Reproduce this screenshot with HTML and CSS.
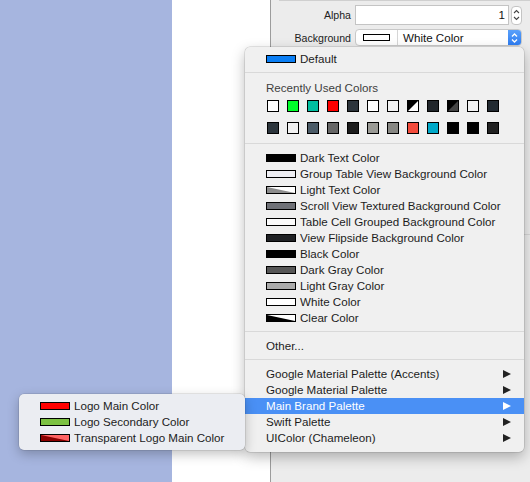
FILE: index.html
```html
<!DOCTYPE html>
<html>
<head>
<meta charset="utf-8">
<link rel="stylesheet" href="styles.css">
</head>
<body>
<div class="app">
  <div class="canvas-blue"></div>
  <div class="canvas-white"></div>
  <div class="divider"></div>
  <div class="inspector">
    <div class="topline"></div>
    <div class="prop-grid">
      <div class="label">Alpha</div>
      <div class="field-wrap">
        <div class="textfield">1</div>
        <div class="stepper">
          <svg width="7" height="14" viewBox="0 0 7 14"><path d="M1 5 L3.5 2.5 L6 5 M1 9 L3.5 11.5 L6 9" fill="none" stroke="#444" stroke-width="1.1"/></svg>
        </div>
      </div>
      <div class="label">Background</div>
      <div class="popup">
        <div class="popup-swatch-cell"><span class="popup-swatch"></span></div>
        <div class="popup-text">White Color</div>
        <div class="popup-arrows">
          <svg width="7" height="12" viewBox="0 0 7 12"><path d="M1 4.5 L3.5 2 L6 4.5 M1 7.5 L3.5 10 L6 7.5" fill="none" stroke="#fff" stroke-width="1.3"/></svg>
        </div>
      </div>
    </div>
    <div class="panel-sep"></div>
  </div>

  <div class="menu">
    <div class="item"><span class="sw" style="background:#0a7ef4"></span>Default</div>
    <div class="sep"></div>
    <div class="header">Recently Used Colors</div>
    <div class="recent">
      <span class="sq" style="background:#ffffff"></span>
      <span class="sq" style="background:#00ff2a"></span>
      <span class="sq" style="background:#00bfa0"></span>
      <span class="sq" style="background:#ff0000"></span>
      <span class="sq" style="background:#2c343b"></span>
      <span class="sq" style="background:#ffffff"></span>
      <span class="sq" style="background:#f1f1f1"></span>
      <span class="sq light-bg"><svg class="tri" width="10" height="10" viewBox="0 0 10 10"><polygon points="0,0 10,0 0,10" fill="#000"/></svg></span>
      <span class="sq" style="background:#21262b"></span>
      <span class="sq grey-bg"><svg class="tri" width="10" height="10" viewBox="0 0 10 10"><polygon points="0,0 10,0 0,10" fill="#000"/></svg></span>
      <span class="sq" style="background:#f1f1f1"></span>
      <span class="sq" style="background:#222a31"></span>

      <span class="sq" style="background:#2c353c"></span>
      <span class="sq" style="background:#f1f1f1"></span>
      <span class="sq" style="background:#4b5b67"></span>
      <span class="sq" style="background:#666666"></span>
      <span class="sq" style="background:#1c1c1c"></span>
      <span class="sq" style="background:#9a9a95"></span>
      <span class="sq" style="background:#878783"></span>
      <span class="sq" style="background:#f44c3c"></span>
      <span class="sq" style="background:#00a9c9"></span>
      <span class="sq" style="background:#000000"></span>
      <span class="sq" style="background:#000000"></span>
      <span class="sq" style="background:#222222"></span>
    </div>
    <div class="sep sep-after-grid"></div>
    <div class="item"><span class="sw" style="background:#000"></span>Dark Text Color</div>
    <div class="item"><span class="sw" style="background:#efeff4"></span>Group Table View Background Color</div>
    <div class="item"><span class="sw light-bg"><svg class="tri" width="28" height="6" viewBox="0 0 28 6"><polygon points="0,0 28,6 0,6" fill="#8c8c8c"/></svg></span>Light Text Color</div>
    <div class="item"><span class="sw" style="background:#6f7177"></span>Scroll View Textured Background Color</div>
    <div class="item"><span class="sw" style="background:#fbfbfb"></span>Table Cell Grouped Background Color</div>
    <div class="item"><span class="sw" style="background:#1f2124"></span>View Flipside Background Color</div>
    <div class="item"><span class="sw" style="background:#000"></span>Black Color</div>
    <div class="item"><span class="sw" style="background:#555"></span>Dark Gray Color</div>
    <div class="item"><span class="sw" style="background:#aaa"></span>Light Gray Color</div>
    <div class="item"><span class="sw" style="background:#fff"></span>White Color</div>
    <div class="item"><span class="sw light-bg"><svg class="tri" width="28" height="6" viewBox="0 0 28 6"><polygon points="0,0 28,6 0,6" fill="#000"/></svg></span>Clear Color</div>
    <div class="sep"></div>
    <div class="item">Other...</div>
    <div class="sep sep-b"></div>
    <div class="item sub">Google Material Palette (Accents)<span class="arrow"></span></div>
    <div class="item sub">Google Material Palette<span class="arrow"></span></div>
    <div class="item sub selected">Main Brand Palette<span class="arrow"></span></div>
    <div class="item sub">Swift Palette<span class="arrow"></span></div>
    <div class="item sub">UIColor (Chameleon)<span class="arrow"></span></div>
  </div>

  <div class="submenu">
    <div class="item"><span class="sw" style="background:#ff0000"></span>Logo Main Color</div>
    <div class="item"><span class="sw" style="background:#7cc142"></span>Logo Secondary Color</div>
    <div class="item"><span class="sw pink-bg"><svg class="tri" width="28" height="6" viewBox="0 0 28 6"><polygon points="0,0 28,6 0,6" fill="#8a0000"/></svg></span>Transparent Logo Main Color</div>
  </div>
</div>
</body>
</html>
```

FILE: styles.css
```css
html, body {
  margin: 0;
  padding: 0;
}
body {
  width: 530px;
  height: 482px;
  overflow: hidden;
  font-family: "Liberation Sans", Arial, sans-serif;
  color: #1c1c1c;
}
.app {
  position: relative;
  width: 530px;
  height: 482px;
  display: grid;
  grid-template-columns: 172px 98px 1px 1fr;
}
.canvas-blue { background: #a6b5df; }
.canvas-white { background: #ffffff; }
.divider { background: #9c9c9c; }
.inspector {
  background: #ececec;
  display: flex;
  flex-direction: column;
}
.topline {
  height: 1px;
  margin-left: 8px;
  background: #cfcfcf;
}
.prop-grid {
  display: grid;
  grid-template-columns: 80px 167px;
  column-gap: 4px;
  row-gap: 4px;
  margin-top: 4px;
  align-items: center;
}
.label {
  text-align: right;
  font-size: 10.6px;
  color: #222;
}
.field-wrap {
  display: flex;
  align-items: center;
  gap: 2px;
}
.textfield {
  width: 154px;
  height: 20px;
  box-sizing: border-box;
  background: #fff;
  border: 1px solid #c4c4c4;
  font-size: 11.6px;
  line-height: 18px;
  text-align: right;
  padding-right: 3px;
  color: #111;
}
.stepper {
  width: 11px;
  height: 19px;
  box-sizing: border-box;
  background: #fff;
  border: 1px solid #c4c4c4;
  border-radius: 4px;
  display: flex;
  align-items: center;
  justify-content: center;
}
.popup {
  height: 17px;
  display: flex;
  background: #fff;
  border: 1px solid #c8c8c8;
  border-radius: 4px;
  box-sizing: border-box;
  overflow: hidden;
}
.popup-swatch-cell {
  width: 41px;
  border-right: 1px solid #d6d6d6;
  display: flex;
  align-items: center;
  justify-content: center;
}
.popup-swatch {
  width: 27px;
  height: 7px;
  box-sizing: border-box;
  border: 1px solid #000;
  background: #fff;
}
.popup-text {
  flex: 1;
  font-size: 11.6px;
  line-height: 15px;
  padding-left: 5px;
  color: #111;
}
.popup-arrows {
  width: 13px;
  background: linear-gradient(#5aa0fa, #2f7ef2);
  display: flex;
  align-items: center;
  justify-content: center;
}
.panel-sep {
  margin-top: 188px;
  height: 1px;
  background: #d6d6d6;
}

/* menu */
.menu {
  position: absolute;
  left: 245px;
  top: 47px;
  width: 279px;
  padding: 4px 0 6px;
  box-sizing: border-box;
  display: flex;
  flex-direction: column;
  background: #f0f0f0;
  border-radius: 5px;
  box-shadow: 0 0 0 0.5px rgba(0,0,0,0.18), 0 5px 14px rgba(0,0,0,0.28);
}
.item {
  position: relative;
  height: 16px;
  line-height: 16px;
  font-size: 11.6px;
  padding-left: 21px;
  display: flex;
  align-items: center;
  white-space: nowrap;
  flex: none;
}
.sw {
  display: inline-block;
  width: 30px;
  height: 8px;
  box-sizing: border-box;
  border: 1px solid #000;
  margin-right: 4px;
  flex: none;
  overflow: hidden;
}
.tri {
  display: block;
}
.light-bg { background: #fff; }
.grey-bg { background: #444; }
.pink-bg { background: #ff6464; }
.sep {
  height: 1px;
  background: #d9d9d9;
  margin: 5px 0 6px;
  flex: none;
}
.sep-b {
  margin: 5px 0 6px;
}
.header {
  height: 16px;
  line-height: 16px;
  font-size: 11.6px;
  color: #3e3e3e;
  padding-left: 21px;
  margin-top: 1px;
}
.recent {
  display: grid;
  grid-template-columns: repeat(12, 12px);
  column-gap: 8px;
  row-gap: 10px;
  padding-left: 22px;
  margin-top: 4px;
}
.sq {
  width: 12px;
  height: 12px;
  box-sizing: border-box;
  border: 1px solid #000;
  overflow: hidden;
}

.sep-after-grid {
  margin: 9px 0 6px;
}

.sub .arrow {
  position: absolute;
  left: 258px;
  top: 3.5px;
  width: 0;
  height: 0;
  border-top: 4.5px solid transparent;
  border-bottom: 4.5px solid transparent;
  border-left: 8px solid #222;
}
.selected {
  background: #4a90f5;
  color: #fff;
}
.selected .arrow {
  border-left-color: #fff;
}

.submenu {
  position: absolute;
  left: 19px;
  top: 394px;
  width: 226px;
  padding: 4px 0 4px;
  box-sizing: border-box;
  display: flex;
  flex-direction: column;
  background: #ebedf2;
  border-radius: 5px;
  box-shadow: 0 0 0 0.5px rgba(0,0,0,0.15), 0 4px 12px rgba(0,0,0,0.25);
}
```
